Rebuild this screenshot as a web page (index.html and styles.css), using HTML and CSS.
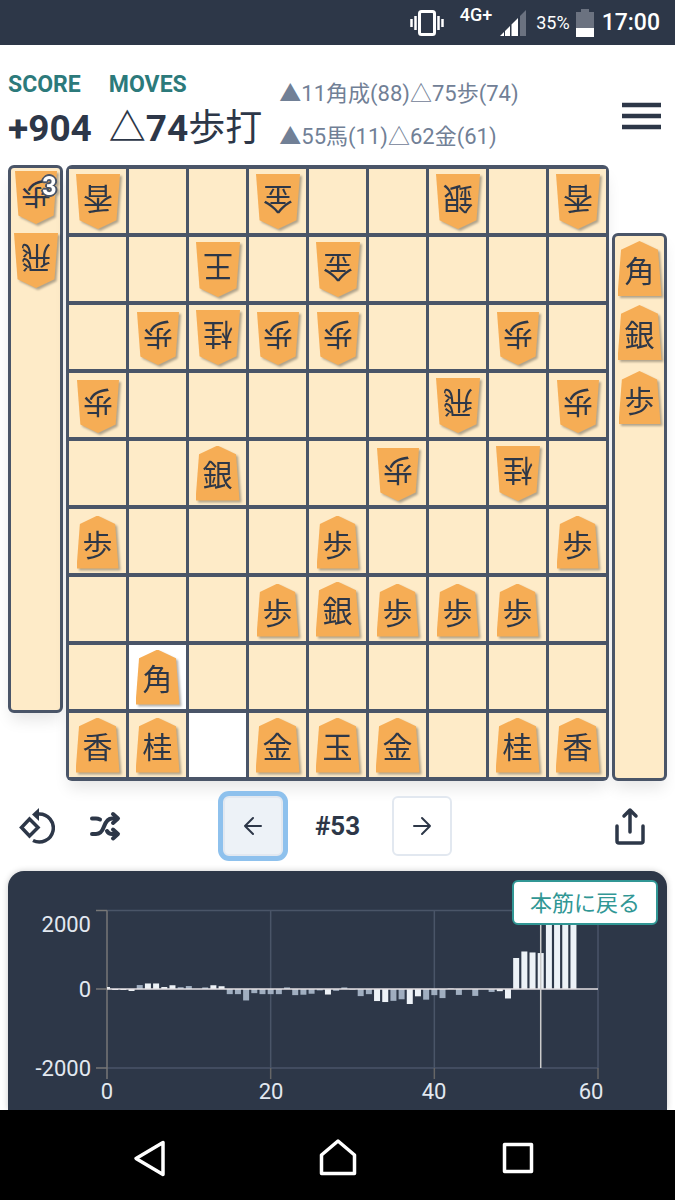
FILE: index.html
```html
<!DOCTYPE html>
<html lang="ja">
<head>
  <meta charset="UTF-8">
  <meta name="viewport" content="width=device-width, initial-scale=1.0">
  <title>#53 △74歩打</title>
  <link rel="stylesheet" href="styles.css">
</head>
<body>
  <div class="statusbar">
    <svg class="vibrate" width="34" height="26" viewBox="0 0 34 26" fill="none" stroke="#fff">
      <rect x="9.5" y="1.5" width="15" height="23" rx="2" stroke-width="3"/>
      <path d="M5.5 6v14M1.5 9v8M28.5 6v14M32.5 9v8" stroke-width="2.5"/>
    </svg>
    <span class="network">4G+</span>
    <svg class="signal" width="26" height="26" viewBox="0 0 26 26">
      <path d="M26 0v26h-6V6z" fill="#6b7280"/>
      <path d="M0 26l4-4v4zM5 26v-5l5-5v10zM11.5 26V14.5l2-2 4.5-4.5v18z" fill="#fff"/>
      <path d="M4.5 20v6M10.5 14v12M19 6v20" stroke="#2d3748"/>
    </svg>
    <span class="percent">35%</span>
    <svg class="battery" width="19" height="28" viewBox="0 0 19 28">
      <path d="M5 0h8v3h5v16H0V3h5z" fill="#6b7280"/>
      <path d="M0 19h18v9H0z" fill="#fff"/>
    </svg>
    <span class="clock">17:00</span>
  </div>

  <header class="header">
    <div class="stat">
      <div class="stat-label">SCORE</div>
      <div class="stat-value">+904</div>
    </div>
    <div class="stat">
      <div class="stat-label">MOVES</div>
      <div class="stat-value">△74<span class="kanji">歩打</span></div>
    </div>
    <div class="line">
      <div>▲11角成(88)△75歩(74)</div>
      <div>▲55馬(11)△62金(61)</div>
    </div>
    <button class="icon-button menu" aria-label="メニュー">
      <svg width="39" height="28" viewBox="0 0 39 28" stroke="#2d3748" stroke-width="4.5">
        <path d="M0 3h39M0 14h39M0 25h39"/>
      </svg>
    </button>
  </header>

  <main>
    <div class="game">
      <div class="hand hand-gote" id="gote"></div>
      <div class="board" id="board"></div>
      <div class="hand hand-sente" id="sente"></div>
    </div>

    <div class="controls">
      <div class="controls-left">
        <button class="icon-button" aria-label="盤面を回転">
          <svg width="36" height="36" viewBox="0 0 36 36" fill="none" stroke="#2d3748" stroke-width="3.5">
            <path d="M10.5 11l8.5 8.5-8.5 8.5L2.5 19.5z"/>
            <path d="M20 6a14 14 0 1 1-6 26.5"/>
            <path d="M20 0v13l-7-6.5z" fill="#2d3748" stroke="none"/>
          </svg>
        </button>
        <button class="icon-button" aria-label="変化">
          <svg width="32" height="32" viewBox="0 0 32 32" fill="none" stroke="#2d3748" stroke-width="4" stroke-linecap="round" stroke-linejoin="round">
            <path d="M3 24h4c4 0 6-2 8-7.5s4-8 8-8h5M3 8.5h4c2 0 3 .5 4 1M18 21c1 2 2.5 3 5 3h5"/>
            <path d="M24 4l5 4.5-5 4.5M24 19.5l5 4.5-5 4.5"/>
          </svg>
        </button>
      </div>
      <div class="pager">
        <button class="step step-focus" aria-label="前の手">
          <svg width="20" height="20" viewBox="0 0 20 20" fill="none" stroke="#2d3748" stroke-width="2" stroke-linecap="round" stroke-linejoin="round">
            <path d="M18 10H2M10 2l-8 8 8 8"/>
          </svg>
        </button>
        <span class="count">#53</span>
        <button class="step" aria-label="次の手">
          <svg width="20" height="20" viewBox="0 0 20 20" fill="none" stroke="#2d3748" stroke-width="2" stroke-linecap="round" stroke-linejoin="round">
            <path d="M2 10h16M10 2l8 8-8 8"/>
          </svg>
        </button>
      </div>
      <div class="controls-right">
        <button class="icon-button" aria-label="共有">
          <svg width="32" height="38" viewBox="0 0 32 38" fill="none" stroke="#2d3748" stroke-width="3.5" stroke-linecap="round" stroke-linejoin="round">
            <path d="M3 19v15q0 2 2 2h22q2 0 2-2V19M16 25V3M10 9l6-6 6 6"/>
          </svg>
        </button>
      </div>
    </div>

    <div class="panel">
      <svg class="chart" id="chart" viewBox="0 0 659 239"></svg>
      <button class="back">本筋に戻る</button>
    </div>
  </main>

  <nav class="navbar">
    <button class="icon-button" aria-label="戻る">
      <svg width="50" height="50" viewBox="0 0 50 50" fill="none" stroke="#fff" stroke-width="3.5" stroke-linejoin="round">
        <path d="M30 12.5v32L3 28.5z"/>
      </svg>
    </button>
    <button class="icon-button" aria-label="ホーム">
      <svg width="50" height="50" viewBox="0 0 50 50" fill="none" stroke="#fff" stroke-width="3.5" stroke-linejoin="round">
        <path d="M25 11l16.5 14v18.5h-33V25z"/>
      </svg>
    </button>
    <button class="icon-button" aria-label="履歴">
      <svg width="50" height="50" viewBox="0 0 50 50" fill="none" stroke="#fff" stroke-width="3.5" stroke-linejoin="round">
        <path d="M11.5 14.5h27v27h-27z"/>
      </svg>
    </button>
  </nav>

  <script src="script.js"></script>
</body>
</html>
```
FILE: styles.css
```css
* { box-sizing: border-box; }
body { margin: 0; min-height: 100vh; display: flex; flex-direction: column; background: #fff; color: #2d3748; font-family: Roboto, "Noto Sans CJK JP", sans-serif; }
main { flex: 1; display: flex; flex-direction: column; }
button { font-family: inherit; cursor: pointer; }
svg { display: block; }

.statusbar { height: 45px; padding: 0 15px; display: flex; justify-content: flex-end; align-items: center; background: #2d3748; color: #fff; }
.vibrate { margin-right: 16px; }
.network { margin-right: 8px; padding-bottom: 16px; font-size: 18px; line-height: 20px; font-weight: 500; }
.signal { margin-right: 10px; }
.percent { margin-right: 6px; font-size: 18px; }
.battery { margin-right: 7px; }
.clock { font-size: 23px; font-weight: 500; }

.header { height: 120px; padding: 24px 8px 3px; display: flex; gap: 17px; white-space: nowrap; }
.stat-label { color: #2c7a7b; font-size: 23px; line-height: 32px; font-weight: 700; }
.stat-value { font-size: 37px; line-height: 56px; font-weight: 700; }
.kanji { font-weight: 400; }
.line { padding-top: 3px; color: #718096; font-size: 22px; line-height: 43px; }
.icon-button { padding: 0; border: none; background: none; }
.menu { margin-left: auto; padding: 0 6px; }

.game { margin: 0 8px; display: flex; gap: 3px; }
.board { flex: 1; display: grid; grid-template-columns: repeat(9, 1fr); grid-auto-rows: 64px; gap: 4px 3px; padding: 4px 3px; background: #4a5568; border-radius: 6px; box-shadow: 0 10px 15px -3px rgba(0,0,0,0.1); }
.cell { display: flex; justify-content: center; align-items: center; background: #feebc8; }
.cell-moved { background: #fff; }
.hand { width: 55px; display: flex; flex-direction: column; align-items: center; gap: 9px; background: #feebc8; border: 3px solid #4a5568; border-radius: 6px; box-shadow: 0 10px 15px -3px rgba(0,0,0,0.1); }
.hand-gote { margin-bottom: 68px; padding-top: 1px; }
.hand-sente { margin-top: 68px; padding-top: 5px; }

.piece { position: relative; height: 55px; display: flex; align-items: flex-end; filter: drop-shadow(2px 2px 1px rgba(0,0,0,0.3)); }
.koma { width: 44px; height: 55px; display: flex; justify-content: center; align-items: center; background: #f6ad55; clip-path: polygon(50% 0, 92% 16%, 100% 100%, 0 100%, 8% 16%); font-family: "Noto Sans CJK JP", sans-serif; font-size: 30px; line-height: 44px; }
.pawn { width: 42px; height: 53px; padding-top: 2px; }
.gote .koma { transform: rotate(180deg); }
.amount { position: absolute; top: 4px; right: 0; color: #fff; font-size: 25px; line-height: 28px; font-weight: 700; text-shadow: 2px 0 #4a5568, -2px 0 #4a5568, 0 2px #4a5568, 0 -2px #4a5568, 1px 1px #4a5568, -1px 1px #4a5568, 1px -1px #4a5568, -1px -1px #4a5568; }

.controls { height: 90px; padding: 0 19px; display: grid; grid-template-columns: 1fr auto 1fr; align-items: center; }
.controls-left { display: flex; align-items: center; gap: 34px; }
.controls-right { padding-right: 10px; display: flex; justify-content: flex-end; }
.pager { display: flex; align-items: center; }
.step { width: 60px; height: 60px; padding: 0; display: flex; justify-content: center; align-items: center; background: #fff; border: 2px solid #e2e8f0; border-radius: 6px; }
.step-focus { background: #edf2f7; box-shadow: 0 0 0 5px #8ec1ed; }
.count { width: 109px; text-align: center; font-size: 26px; font-weight: 700; }

.panel { position: relative; flex: 1; margin: 0 8px; background: #2d3748; border-radius: 16px 16px 0 0; box-shadow: 0 0 6px rgba(0,0,0,0.2); }
.chart { width: 100%; font-size: 22px; fill: #e2e8f0; }
.back { position: absolute; top: 9px; right: 9px; width: 146px; height: 45px; padding: 0 0 4px; background: #fff; border: 2px solid #319795; border-radius: 6px; color: #319795; font-size: 22px; }

.navbar { position: relative; height: 90px; display: flex; justify-content: center; align-items: center; gap: 130px; background: #000; }
```
FILE: script.js
```js
// "v" marks a piece facing down, "*" a highlighted square
const rows = [
  "香v . . 金v . . 銀v . 香v",
  ". . 王v . 金v . . . .",
  ". 歩v 桂v 歩v 歩v . . 歩v .",
  "歩v . . . . . 飛v . 歩v",
  ". . 銀 . . 歩v . 桂v .",
  "歩 . . . 歩 . . . 歩",
  ". . . 歩 銀 歩 歩 歩 .",
  ". 角* . . . . . . .",
  "香 桂 .* 金 玉 金 . 桂 香"
];

function piece(name, gote, amount) {
  const pawn = name === "歩" ? " pawn" : "";
  const badge = amount ? `<span class="amount">${amount}</span>` : "";
  return `<div class="piece${gote ? " gote" : ""}"><span class="koma${pawn}">${name}</span>${badge}</div>`;
}

document.getElementById("board").innerHTML = rows.join(" ").split(" ").map(s => {
  const moved = s.includes("*") ? " cell-moved" : "";
  return `<div class="cell${moved}">${s[0] === "." ? "" : piece(s[0], s.includes("v"))}</div>`;
}).join("");
document.getElementById("gote").innerHTML = piece("歩", true, 3) + piece("飛", true);
document.getElementById("sente").innerHTML = ["角", "銀", "歩"].map(n => piece(n, false)).join("");

// evaluation after each move
const scores = [
  50, -25, -25, -50, 100, 140, 140, 50, 95, 45, 75, 0, 40, 95, 70, -130, -130, -290, -105, -130,
  -130, -130, 40, -155, -145, -120, -35, -140, -45, 40, -15, -180, -130, -305, -330, -300, -260, -380, -185, -270,
  -155, -230, 15, -150, 0, -175, 0, -75, -55, -240, 785, 950, 925, 910, 2000, 2000, 2000, 2000
];
// moves that get the bright colour
const bright = [0, 1, 2, 3, 5, 6, 7, 8, 13, 14, 27, 33, 34, 37, 38, 48, 49, 50, 51, 52, 53, 54, 55, 56, 57];
const left = 99, right = 590, top_ = 39.5, zero = 118, bottom = 197;
const x = n => left + n * (right - left) / 60;
const y = v => zero - v * (bottom - zero) / 2000;
const line = (x1, y1, x2, y2, color) => `<path d="M${x1} ${y1}L${x2} ${y2}" stroke="${color}" stroke-width="1.5"/>`;

let out = line(left, top_, right, top_, "#4a5568") + line(left, bottom, right, bottom, "#4a5568");
[20, 40, 60].forEach(n => {
  out += line(x(n), top_, x(n), bottom, "#4a5568") + line(x(n), bottom, x(n), bottom + 11, "#666");
});
out += line(left, top_, left, bottom + 11, "#777");
[top_, zero, bottom].forEach(v => { out += line(left - 11, v, left, v, "#777"); });
scores.forEach((v, i) => {
  const x1 = Math.max(left, x(i) - 3);
  out += `<rect x="${x1}" y="${Math.min(zero, y(v))}" width="${x(i) + 3 - x1}" height="${Math.abs(y(v) - zero)}" fill="${bright.includes(i) ? "#edf2f7" : "#a0aec0"}"/>`;
});
out += line(left, zero, right, zero, "#e5e0e3") + line(x(53), top_, x(53), bottom, "#ccc");
out += `<g text-anchor="end"><text x="83" y="61">2000</text><text x="83" y="126">0</text><text x="83" y="205">-2000</text></g>`;
out += `<g text-anchor="middle"><text x="99" y="228">0</text><text x="263" y="228">20</text><text x="426" y="228">40</text><text x="583" y="228">60</text></g>`;
document.getElementById("chart").innerHTML = out;
```
